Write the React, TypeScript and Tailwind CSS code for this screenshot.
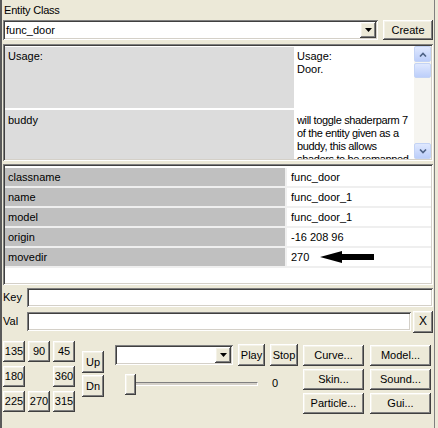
import React from 'react';

// classic 3D edges
const raised =
  'bg-[#ece9d8] shadow-[inset_-1px_-1px_0_#404040,inset_1px_1px_0_#ffffff,inset_-2px_-2px_0_#808080,inset_2px_2px_0_#f4f2e8]';
const sunken =
  'shadow-[inset_1px_1px_0_#808080,inset_-1px_-1px_0_#ffffff,inset_2px_2px_0_#404040,inset_-2px_-2px_0_#d4d0c8]';

function Btn({ children, className = '' }: { children?: React.ReactNode; className?: string }) {
  return (
    <button className={`flex items-center justify-center leading-[13px] ${raised} ${className}`}>
      {children}
    </button>
  );
}

function Combo({ value = '', className = '' }: { value?: string; className?: string }) {
  return (
    <div className={`flex bg-white p-[2px] ${sunken} ${className}`}>
      <div className="flex-1 pl-[1px] leading-[16px]">{value}</div>
      <div className={`flex w-[16px] items-center justify-center ${raised}`}>
        <svg width="7" height="4" viewBox="0 0 7 4">
          <path d="M0 0h7L3.5 4z" fill="#000" />
        </svg>
      </div>
    </div>
  );
}

function ScrollBtn({ dir }: { dir: 'up' | 'down' }) {
  return (
    <div className="flex h-[16px] w-[17px] items-center justify-center rounded-[2px] border border-[#c3d3f5] bg-gradient-to-b from-[#dfe8fe] to-[#bccefa]">
      <svg width="8" height="5" viewBox="0 0 8 5">
        <path
          d={dir === 'up' ? 'M1 4.5L4 1.5L7 4.5' : 'M1 0.5L4 3.5L7 0.5'}
          fill="none"
          stroke="#4d6185"
          strokeWidth="1.6"
        />
      </svg>
    </div>
  );
}

const props = [
  { key: 'classname', val: 'func_door' },
  { key: 'name', val: 'func_door_1' },
  { key: 'model', val: 'func_door_1' },
  { key: 'origin', val: '-16 208 96' },
  { key: 'movedir', val: '270' },
];

const dirs = ['135', '90', '45', '180', '', '360', '225', '270', '315'];

export default function App() {
  return (
    <div className="h-[428px] w-[438px] overflow-hidden bg-[#ece9d8] font-['Liberation_Sans',Arial,sans-serif] text-[11px] leading-[13px] text-black">
      <div className="flex h-full w-[435px] flex-col border-l-2 border-r border-l-[#5a5a5a] border-r-[#808080] pl-[1px] pr-[1px]">
        <div className="h-[20px] pl-[1px] pt-[4px] tracking-[-0.2px]">Entity Class</div>

        <div className="flex h-[20px] gap-[5px]">
          <Combo value="func_door" className="flex-1" />
          <Btn className="w-[50px]">Create</Btn>
        </div>

        {/* entity description */}
        <div className={`mt-[4px] flex h-[117px] p-[2px] ${sunken}`}>
          <div className="flex flex-1 flex-col gap-[2px] bg-white pt-[1px]">
            <div className="flex h-[61px]">
              <div className="flex-1 bg-[#dcdcdc] pl-[3px] pt-[3px]">Usage:</div>
              <div className="w-[120px] pl-[3px] pt-[3px]">
                Usage:
                <br />
                Door.
              </div>
            </div>
            <div className="flex h-[49px]">
              <div className="flex-1 bg-[#dcdcdc] pl-[3px] pt-[4px]">buddy</div>
              <div className="w-[120px] overflow-hidden whitespace-nowrap pl-[3px] pt-[4px] tracking-[-0.35px]">
                will toggle shaderparm 7
                <br />
                of the entity given as a
                <br />
                buddy, this allows
                <br />
                shaders to be remapped
              </div>
            </div>
          </div>
          <div className="flex w-[17px] flex-col bg-[#f6f5f0]">
            <ScrollBtn dir="up" />
            <div className="mt-[1px] h-[15px] rounded-[2px] border border-[#c3d3f5] bg-gradient-to-b from-[#dfe8fe] to-[#bccefa]" />
            <div className="flex-1" />
            <ScrollBtn dir="down" />
          </div>
        </div>

        {/* key / value list */}
        <div className={`mt-[3px] h-[121px] bg-white p-[2px] ${sunken}`}>
          <div className="pt-[2px]">
            {props.map((p) => (
              <div key={p.key} className="flex h-[20px] gap-[2px] border-b-2 border-b-[#efefef] bg-[#efefef]">
                <div className="w-[280px] bg-[#c0c0c0] pl-[3px] leading-[18px]">{p.key}</div>
                <div className="flex flex-1 items-center bg-white pl-[4px] leading-[18px]">
                  {p.val}
                  {p.key === 'movedir' && (
                    <svg className="ml-[11px]" width="54" height="12" viewBox="0 0 54 12">
                      <path d="M0 6L22 0V3H54V9H22V12Z" fill="#000" />
                    </svg>
                  )}
                </div>
              </div>
            ))}
          </div>
        </div>

        <div className="mt-[3px] flex h-[19px] items-center">
          <div className="w-[24px]">Key</div>
          <div className={`h-full flex-1 bg-white ${sunken}`} />
        </div>
        <div className="mt-[5px] flex h-[19px] items-center">
          <div className="w-[24px]">Val</div>
          <div className={`h-full w-[384px] bg-white ${sunken}`} />
          <Btn className="ml-[2px] h-[22px] w-[20px] text-[12px]">X</Btn>
        </div>

        <div className="mt-[9px] flex items-start">
          {/* direction pad */}
          <div className="grid grid-cols-[22px_22px_22px] grid-rows-[21px_21px_21px] gap-x-[3px] gap-y-[4px] pt-[1px]">
            {dirs.map((d, i) => (d ? <Btn key={i}>{d}</Btn> : <div key={i} />))}
          </div>

          <div className="ml-[7px] flex flex-col gap-[2px] pt-[11px]">
            <Btn className="h-[22px] w-[22px]">Up</Btn>
            <Btn className="h-[22px] w-[22px]">Dn</Btn>
          </div>

          <div className="ml-[11px] flex w-[183px] flex-col pt-[4px]">
            <div className="flex items-center">
              <Combo className="h-[20px] w-[118px]" />
              <Btn className="ml-[5px] h-[22px] w-[27px]">Play</Btn>
              <Btn className="ml-[5px] h-[22px] w-[28px]">Stop</Btn>
            </div>
            <div className="mt-[8px] flex">
              <div className="relative ml-[10px] h-[21px] w-[133px]">
                <div className="mt-[8px] h-[4px] border-b border-l border-r border-t border-b-white border-l-[#808080] border-r-white border-t-[#808080] bg-[#d4d0c8]" />
                <Btn className="absolute left-0 top-0 h-[21px] w-[11px]" />
              </div>
              <div className="ml-[14px] pt-[3px]">0</div>
            </div>
          </div>

          <div className="ml-[5px] grid grid-cols-[61px_61px] grid-rows-[21px_21px_21px] gap-x-[6px] gap-y-[3px] pt-[5px]">
            <Btn>Curve...</Btn>
            <Btn>Model...</Btn>
            <Btn>Skin...</Btn>
            <Btn>Sound...</Btn>
            <Btn>Particle...</Btn>
            <Btn>Gui...</Btn>
          </div>
        </div>
      </div>
    </div>
  );
}
